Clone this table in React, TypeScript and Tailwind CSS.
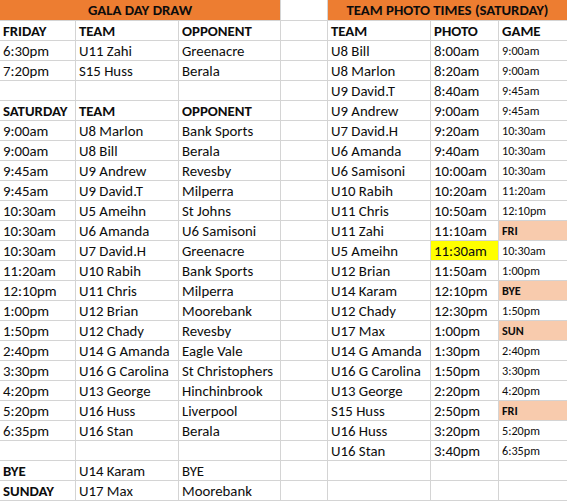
import React from 'react';

type Cell = { text?: string; bold?: boolean; small?: boolean; fill?: string };

const left: [string, string, string, boolean?][] = [
  ['FRIDAY', 'TEAM', 'OPPONENT', true],
  ['6:30pm', 'U11 Zahi', 'Greenacre'],
  ['7:20pm', 'S15 Huss', 'Berala'],
  ['', '', ''],
  ['SATURDAY', 'TEAM', 'OPPONENT', true],
  ['9:00am', 'U8 Marlon', 'Bank Sports'],
  ['9:00am', 'U8 Bill', 'Berala'],
  ['9:45am', 'U9 Andrew', 'Revesby'],
  ['9:45am', 'U9 David.T', 'Milperra'],
  ['10:30am', 'U5 Ameihn', 'St Johns'],
  ['10:30am', 'U6 Amanda', 'U6 Samisoni'],
  ['10:30am', 'U7 David.H', 'Greenacre'],
  ['11:20am', 'U10 Rabih', 'Bank Sports'],
  ['12:10pm', 'U11 Chris', 'Milperra'],
  ['1:00pm', 'U12 Brian', 'Moorebank'],
  ['1:50pm', 'U12 Chady', 'Revesby'],
  ['2:40pm', 'U14 G Amanda', 'Eagle Vale'],
  ['3:30pm', 'U16 G Carolina', 'St Christophers'],
  ['4:20pm', 'U13 George', 'Hinchinbrook'],
  ['5:20pm', 'U16 Huss', 'Liverpool'],
  ['6:35pm', 'U16 Stan', 'Berala'],
  ['', '', ''],
  ['BYE', 'U14 Karam', 'BYE'],
  ['SUNDAY', 'U17 Max', 'Moorebank'],
];

const right: [string, string, string][] = [
  ['TEAM', 'PHOTO', 'GAME'],
  ['U8 Bill', '8:00am', '9:00am'],
  ['U8 Marlon', '8:20am', '9:00am'],
  ['U9 David.T', '8:40am', '9:45am'],
  ['U9 Andrew', '9:00am', '9:45am'],
  ['U7 David.H', '9:20am', '10:30am'],
  ['U6 Amanda', '9:40am', '10:30am'],
  ['U6 Samisoni', '10:00am', '10:30am'],
  ['U10 Rabih', '10:20am', '11:20am'],
  ['U11 Chris', '10:50am', '12:10pm'],
  ['U11 Zahi', '11:10am', 'FRI'],
  ['U5 Ameihn', '11:30am', '10:30am'],
  ['U12 Brian', '11:50am', '1:00pm'],
  ['U14 Karam', '12:10pm', 'BYE'],
  ['U12 Chady', '12:30pm', '1:50pm'],
  ['U17 Max', '1:00pm', 'SUN'],
  ['U14 G Amanda', '1:30pm', '2:40pm'],
  ['U16 G Carolina', '1:50pm', '3:30pm'],
  ['U13 George', '2:20pm', '4:20pm'],
  ['S15 Huss', '2:50pm', 'FRI'],
  ['U16 Huss', '3:20pm', '5:20pm'],
  ['U16 Stan', '3:40pm', '6:35pm'],
  ['', '', ''],
  ['', '', ''],
];

const C = ({ c, last }: { c: Cell; last?: boolean }) => (
  <div
    className={`h-[20px] flex items-end pl-[3px] border-b border-[#d4d4d4] whitespace-nowrap overflow-hidden ${
      last ? '' : 'border-r'
    } ${c.bold ? 'font-bold' : 'font-medium'} ${c.small ? 'text-[12.2px]' : 'text-[14.8px]'} leading-[18px]`}
    style={c.fill ? { backgroundColor: c.fill } : undefined}
  >
    {c.text}
  </div>
);

export default function App() {
  const cells: React.ReactNode[] = [];
  left.forEach((row, i) => {
    const r = right[i];
    const tags = ['FRI', 'BYE', 'SUN'];
    const isTag = tags.includes(r[2]);
    const list: Cell[] = [
      { text: row[0], bold: row[3] || row[0] === 'BYE' || row[0] === 'SUNDAY' },
      { text: row[1], bold: row[3] },
      { text: row[2], bold: row[3] },
      {},
      { text: r[0], bold: i === 0 },
      { text: r[1], bold: i === 0, fill: r[1] === '11:30am' ? '#ffff00' : undefined },
      { text: r[2], bold: i === 0 || isTag, small: i !== 0, fill: isTag ? '#f8cbad' : undefined },
    ];
    list.forEach((c, j) => cells.push(<C key={`${i}-${j}`} c={c} last={j === 6} />));
  });

  return (
    <div className="w-[567px] h-[501px] bg-white text-[#0d0d0d] overflow-hidden" style={{ fontFamily: 'Carlito, Lato, "Open Sans", sans-serif' }}>
      <div className="grid grid-cols-[76px_103px_102px_47px_103px_68px_68px]">
        <div className="col-span-3 h-[21px] bg-[#ed7d31] border-r border-b border-[#d4d4d4] flex items-end justify-center pb-[1px] font-bold text-[14.8px] leading-[18px]">
          GALA DAY DRAW
        </div>
        <div className="h-[21px] border-r border-b border-[#d4d4d4]" />
        <div className="col-span-3 h-[21px] bg-[#ed7d31] border-b border-[#d4d4d4] flex items-end justify-center pb-[1px] font-bold text-[14.8px] leading-[18px]">
          TEAM PHOTO TIMES (SATURDAY)
        </div>
        {cells}
      </div>
    </div>
  );
}
